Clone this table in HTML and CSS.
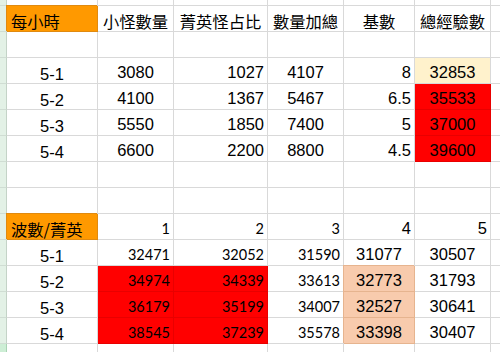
FILE: index.html
```html
<!DOCTYPE html>
<html lang="zh-Hant">
<head>
<meta charset="utf-8">
<link rel="stylesheet" href="styles.css">
<title>Sheet</title>
</head>
<body>
<div class="sheet">
  <div class="row top">
    <div class="c hd"></div><div class="c"></div><div class="c"></div><div class="c"></div><div class="c"></div><div class="c"></div><div class="c"></div><div class="c"></div>
  </div>
  <div class="row">
    <div class="c hd"></div>
    <div class="c cjk l orange">每小時</div>
    <div class="c cjk m">小怪數量</div>
    <div class="c cjk m">菁英怪占比</div>
    <div class="c cjk m">數量加總</div>
    <div class="c cjk m">基數</div>
    <div class="c cjk m">總經驗數</div>
    <div class="c"></div>
  </div>
  <div class="row">
    <div class="c hd"></div><div class="c"></div><div class="c"></div><div class="c"></div><div class="c"></div><div class="c"></div><div class="c"></div><div class="c"></div>
  </div>
  <div class="row">
    <div class="c hd"></div>
    <div class="c lab m">5-1</div>
    <div class="c ar m">3080</div>
    <div class="c ar r">1027</div>
    <div class="c ar m">4107</div>
    <div class="c ar r">8</div>
    <div class="c ar m cream">32853</div>
    <div class="c"></div>
  </div>
  <div class="row">
    <div class="c hd"></div>
    <div class="c lab m">5-2</div>
    <div class="c ar m">4100</div>
    <div class="c ar r">1367</div>
    <div class="c ar m">5467</div>
    <div class="c ar r">6.5</div>
    <div class="c ar m red">35533</div>
    <div class="c"></div>
  </div>
  <div class="row">
    <div class="c hd"></div>
    <div class="c lab m">5-3</div>
    <div class="c ar m">5550</div>
    <div class="c ar r">1850</div>
    <div class="c ar m">7400</div>
    <div class="c ar r">5</div>
    <div class="c ar m red">37000</div>
    <div class="c"></div>
  </div>
  <div class="row">
    <div class="c hd"></div>
    <div class="c lab m">5-4</div>
    <div class="c ar m">6600</div>
    <div class="c ar r">2200</div>
    <div class="c ar m">8800</div>
    <div class="c ar r">4.5</div>
    <div class="c ar m red">39600</div>
    <div class="c"></div>
  </div>
  <div class="row">
    <div class="c hd"></div><div class="c"></div><div class="c"></div><div class="c"></div><div class="c"></div><div class="c"></div><div class="c"></div><div class="c"></div>
  </div>
  <div class="row">
    <div class="c hd"></div><div class="c"></div><div class="c"></div><div class="c"></div><div class="c"></div><div class="c"></div><div class="c"></div><div class="c"></div>
  </div>
  <div class="row">
    <div class="c hd"></div>
    <div class="c cjk l orange">波數/菁英</div>
    <div class="c cal r">1</div>
    <div class="c cal r">2</div>
    <div class="c cal r">3</div>
    <div class="c ar r">4</div>
    <div class="c ar r">5</div>
    <div class="c"></div>
  </div>
  <div class="row">
    <div class="c hd"></div>
    <div class="c lab m">5-1</div>
    <div class="c cal r">32471</div>
    <div class="c cal r">32052</div>
    <div class="c cal r">31590</div>
    <div class="c ar m">31077</div>
    <div class="c ar m">30507</div>
    <div class="c"></div>
  </div>
  <div class="row">
    <div class="c hd"></div>
    <div class="c lab m">5-2</div>
    <div class="c cal r red">34974</div>
    <div class="c cal r red">34339</div>
    <div class="c cal r">33613</div>
    <div class="c ar m peach">32773</div>
    <div class="c ar m">31793</div>
    <div class="c"></div>
  </div>
  <div class="row">
    <div class="c hd"></div>
    <div class="c lab m">5-3</div>
    <div class="c cal r red">36179</div>
    <div class="c cal r red">35199</div>
    <div class="c cal r">34007</div>
    <div class="c ar m peach">32527</div>
    <div class="c ar m">30641</div>
    <div class="c"></div>
  </div>
  <div class="row">
    <div class="c hd"></div>
    <div class="c lab m">5-4</div>
    <div class="c cal r red">38545</div>
    <div class="c cal r red">37239</div>
    <div class="c cal r">35578</div>
    <div class="c ar m peach">33398</div>
    <div class="c ar m">30407</div>
    <div class="c"></div>
  </div>
  <div class="row last">
    <div class="c hd sel"></div><div class="c"></div><div class="c"></div><div class="c"></div><div class="c"></div><div class="c"></div><div class="c"></div><div class="c"></div>
  </div>
</div>
</body>
</html>
```
FILE: styles.css
```css
html, body {
  margin: 0;
  padding: 0;
  background: #ffffff;
  overflow: hidden;
}

.sheet {
  display: flex;
  flex-direction: column;
  width: 520px;
  color: #000;
}

.row {
  display: grid;
  grid-template-columns: 7px 91px 76px 94px 76px 71px 76px 29px;
  height: 26px;
}

.row.top { height: 6px; }
.row.last { height: 20px; }

.c {
  box-sizing: border-box;
  border-right: 1px solid #d9d9d9;
  border-bottom: 1px solid #d9d9d9;
  display: flex;
  align-items: flex-end;
  padding: 0 3px;
  white-space: nowrap;
  overflow: hidden;
  line-height: 18px;
}

.hd {
  background: #e3f1e6;
  border-right-color: #c4d3c7;
  border-bottom-color: #d0ddd3;
  padding: 0;
}

.hd.sel {
  background: #cdeed5;
  border-right-color: #a9d3b4;
}

.l { justify-content: flex-start; }
.m { justify-content: center; }
.r { justify-content: flex-end; }

.cjk {
  font-family: "Noto Sans CJK TC", "Noto Sans CJK SC", sans-serif;
  font-size: 16.3px;
  padding-bottom: 1px;
}

.ar {
  font-family: "Liberation Sans", Arial, sans-serif;
  font-size: 16.5px;
  padding-bottom: 2px;
}

.lab {
  font-family: "Liberation Sans", Arial, sans-serif;
  font-size: 16.5px;
  padding-bottom: 0;
}

.cal {
  font-family: Lato, "Open Sans", sans-serif;
  font-size: 14.5px;
  padding-bottom: 1px;
}

.orange {
  background: #ff9900;
  border-right-color: #e08a10;
  border-bottom-color: #e08a10;
  box-shadow: -1px -1px 0 0 #e08a10;
  position: relative;
  z-index: 1;
  padding-left: 4px;
}

.cream {
  background: #fff2cc;
}

.red {
  background: #ff0000;
  border-right-color: #e80000;
  border-bottom-color: #e80000;
}

.peach {
  background: #f8cbad;
  border-right-color: #e6b48f;
  border-bottom-color: #e6b48f;
  box-shadow: -1px -1px 0 0 #e6b48f;
  position: relative;
  z-index: 1;
}
```
